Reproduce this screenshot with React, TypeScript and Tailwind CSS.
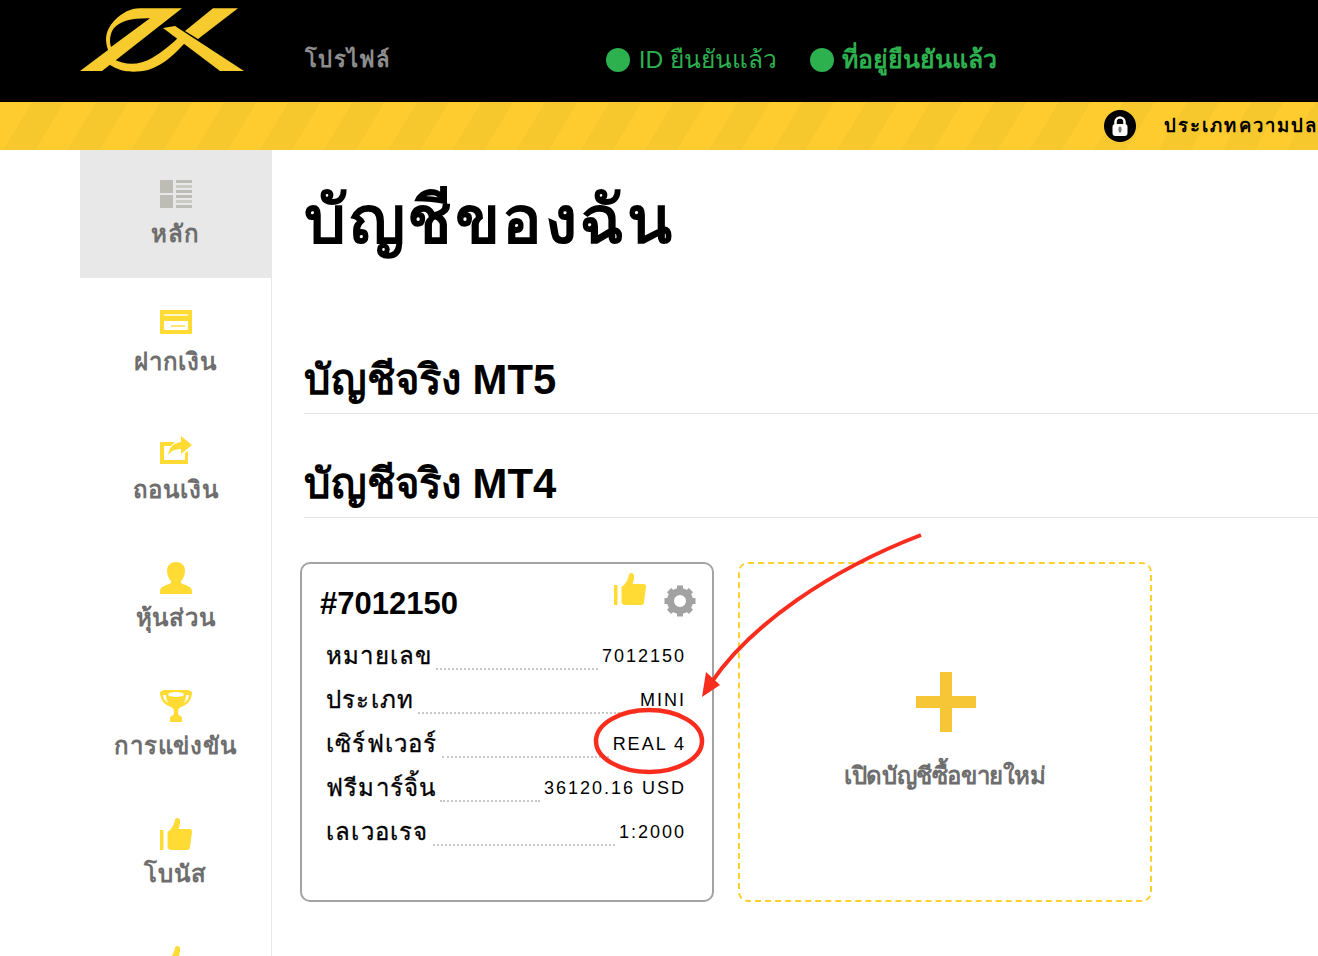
import React from "react";

const yellow = "#ffdb33";

const GridIcon = () => (
  <svg width="32" height="28" viewBox="0 0 32 28" fill="#bdbdb5">
    <rect x="0" y="0" width="13" height="13" />
    <rect x="0" y="15" width="13" height="13" />
    <rect x="16" y="0" width="16" height="3" />
    <rect x="16" y="5" width="16" height="3" opacity="0.7" />
    <rect x="16" y="10" width="16" height="3" />
    <rect x="16" y="15" width="16" height="3" />
    <rect x="16" y="20" width="16" height="3" opacity="0.7" />
    <rect x="16" y="25" width="16" height="3" />
  </svg>
);

const CardIcon = () => (
  <svg width="32" height="24" viewBox="0 0 32 24">
    <rect width="32" height="24" fill={yellow} />
    <rect x="4" y="4" width="24" height="2" fill="#fff" opacity="0.7" />
    <rect x="4" y="11" width="24" height="9" rx="1" fill="#fff" />
    <rect x="11" y="15" width="14" height="2" fill={yellow} opacity="0.7" />
  </svg>
);

const ShareIcon = () => (
  <svg width="32" height="28" viewBox="0 0 32 28" fill={yellow}>
    <path d="M0 6h15l-4 4H4v14h21v-7l3-2v13H0z" />
    <path d="M21 0l11 9-11 9v-5c-6 0-10 2-13 6 1-7 5-12 13-13z" />
  </svg>
);

const PersonIcon = () => (
  <svg width="32" height="32" viewBox="0 0 32 32" fill={yellow}>
    <path d="M16 0c6 0 9 4 9 9 0 4-2 8-4 10v2c3 2 11 3 11 8v3H0v-3c0-5 8-6 11-8v-2c-2-2-4-6-4-10 0-5 3-9 9-9z" />
  </svg>
);

const TrophyIcon = () => (
  <svg width="32" height="32" viewBox="0 0 32 32" fill={yellow}>
    <path d="M4 0h24l4 2c0 7-4 13-11 15-2 1-3 2-3 5 0 2 1 4 4 5v5H10v-5c3-1 4-3 4-5 0-3-1-4-3-5C4 15 0 9 0 2z" />
    <ellipse cx="16" cy="4.500" rx="8" ry="2.500" fill="#fff" />
    <path d="M3 5c0 3 2 6 5 8-1-2-2-5-2-8zM29 5c0 3-2 6-5 8 1-2 2-5 2-8z" fill="#fff" />
  </svg>
);

const ThumbIcon = () => (
  <svg width="32" height="32" viewBox="0 0 32 32" fill={yellow}>
    <rect x="0" y="12" width="3.500" height="20" />
    <path d="M7.500 14c3-2 6-6 7-10 0-2 1-4 3-4 3 0 3 4 2 8l-1 3h11c2 0 2.500 1 2.500 3l-2 15c0 2-1 3-3 3H12c-3 0-4.500-1-4.500-3z" />
  </svg>
);

// ring plus eight teeth, the reference gear is a bit soft and light
const GearIcon = () => (
  <svg width="32" height="32" viewBox="0 0 32 32" fill="#a2a2a2">
    <circle cx="16" cy="16" r="9.500" fill="none" stroke="#a2a2a2" strokeWidth="7" />
    {[0, 45, 90, 135, 180, 225, 270, 315].map((a) => (
      <rect key={a} x="13" y="0.500" width="6" height="6" transform={`rotate(${a} 16 16)`} />
    ))}
  </svg>
);

const navItems = [
  { label: "หลัก", icon: <GridIcon />, active: true },
  { label: "ฝากเงิน", icon: <CardIcon /> },
  { label: "ถอนเงิน", icon: <ShareIcon /> },
  { label: "หุ้นส่วน", icon: <PersonIcon /> },
  { label: "การแข่งขัน", icon: <TrophyIcon /> },
  { label: "โบนัส", icon: <ThumbIcon /> },
  { label: "", icon: <ThumbIcon /> },
];

const rows = [
  { k: "หมายเลข", v: "7012150" },
  { k: "ประเภท", v: "MINI" },
  { k: "เซิร์ฟเวอร์", v: "REAL 4" },
  { k: "ฟรีมาร์จิ้น", v: "36120.16 USD" },
  { k: "เลเวอเรจ", v: "1:2000" },
];

export default function App() {
  return (
    <div className="relative h-[956px] overflow-hidden bg-white font-['Liberation_Sans','Noto_Sans',sans-serif]">
      <header className="flex h-[102px] items-start bg-black pl-20">
        <svg width="164" height="64" viewBox="0 0 164 64" className="mt-[8px]" fill="#f7cb2d">
          <path
            fillRule="evenodd"
            d="M0 63 L28 42 C24 30 26 22 34 13 C42 5 50 0.300 60 0.300 L102 0.300 L22 63 Z M70 10.300 C52 10 40 13 34 20 C30 25 29 33 31 39 Z"
          />
          <path d="M33 51 C46 58 60 57 72 50 C82 44 92 36 100 28 L106 34 C96 44 86 56 68 62 C60 64 50 64 45 63 C38 62 32 58 28 56 Z" />
          <path d="M83 20 L95 18 L164 63 L140 63 Z" />
          <path d="M133 0.300 L158 0.300 L118 31 L105 23 Z" />
        </svg>
        <div className="ml-[61px] mt-[46px] text-[22px] leading-[28px] font-bold tracking-[1.3px] text-[#8e8e8e]">โปรไฟล์</div>
        <div className="ml-[215px] mt-[44px] flex items-center text-[25px] leading-[32px] text-[#2db14f]">
          <span className="h-6 w-6 rounded-full bg-[#2db14f]" />
          <span className="ml-[9px] text-[24.500px]">ID ยืนยันแล้ว</span>
          <span className="ml-[33px] h-6 w-6 rounded-full bg-[#2db14f]" />
          <span className="ml-[8px] text-[24.800px] font-bold">ที่อยู่ยืนยันแล้ว</span>
        </div>
      </header>
      <div className="flex h-12 items-center justify-end overflow-hidden whitespace-nowrap bg-[repeating-linear-gradient(121deg,#fecc2e_0px,#fecc2e_27.5px,#f6c82e_27.5px,#f6c82e_55px)]">
        <span className="flex h-8 w-8 items-center justify-center rounded-full bg-black">
          <svg width="18" height="20" viewBox="0 0 18 20">
            <path d="M4.500 9V6a4.500 4.500 0 0 1 9 0v3" fill="none" stroke="#fff" strokeWidth="2.500" />
            <rect x="1.500" y="8" width="15" height="12" rx="3" fill="#fff" />
            <rect x="7.500" y="10.500" width="3" height="6" rx="1.500" fill="#777" />
          </svg>
        </span>
        <span className="ml-[28px] w-[154px] overflow-hidden text-[18.500px] font-bold tracking-[2.1px] text-black">ประเภทความปลอดภัย</span>
      </div>
      <div className="flex">
        <aside className="ml-20 w-[192px] shrink-0 border-r border-[#e8e8e8]">
          {navItems.map((item, i) => (
            <div
              key={i}
              className={`flex h-[128px] flex-col items-center pt-[28px] ${item.active ? "bg-[#e8e8e8]" : ""}`}
            >
              <div className="flex h-8 items-center justify-center">{item.icon}</div>
              <div className="mt-[8px] text-[24px] leading-[32px] font-bold tracking-[0.8px] text-[#6e6e6e]">{item.label}</div>
            </div>
          ))}
        </aside>
        <main className="min-w-0 flex-1 pl-8">
          <h1 className="mt-[30px] text-[66px] leading-[80px] font-bold tracking-[2.5px] text-black">บัญชีของฉัน</h1>
          <h2 className="mt-[94px] border-b border-[#e4e4e4] pb-[7px] text-[41.800px] leading-[52px] font-bold text-black">บัญชีจริง MT5</h2>
          <h2 className="mt-[44px] border-b border-[#e4e4e4] pb-[7px] text-[41.800px] leading-[52px] font-bold text-black">บัญชีจริง MT4</h2>
          <div className="-ml-1 mt-[44px] flex gap-[24px]">
            <div className="h-[340px] w-[414px] rounded-[10px] border-2 border-[#a3a3a3] px-[18px] pt-[8px]">
              <div className="flex items-start justify-between">
                <div className="mt-[12px] text-[31px] leading-[40px] font-bold text-black">#7012150</div>
                <div className="-mr-[2px] mt-px flex items-start gap-[18px]">
                  <ThumbIcon />
                  <div className="mt-[12px]"><GearIcon /></div>
                </div>
              </div>
              <div className="mt-[8px] pl-[6px] pr-[8px]">
                {rows.map((r) => (
                  <div key={r.k} className="flex h-[44px] items-end pb-[2px]">
                    <span className="text-[24px] leading-[36px] tracking-[1.2px] text-black [-webkit-text-stroke:0.3px_black]">{r.k}</span>
                    <span className="mx-[4px] mb-[4px] flex-1 border-b-2 border-dotted border-[#c8c8c8]" />
                    <span className="text-[18px] leading-[36px] tracking-[2px] text-black">{r.v}</span>
                  </div>
                ))}
              </div>
            </div>
            <div className="flex h-[340px] w-[414px] flex-col items-center rounded-[10px] border-2 border-dashed border-[#fdd02f] pt-[108px]">
              <svg width="60" height="60" viewBox="0 0 60 60" fill="#f6c636" className="ml-[2px]">
                <rect x="24" y="0" width="12" height="60" />
                <rect x="0" y="24" width="60" height="12" />
              </svg>
              <div className="mt-[28px] text-[24px] leading-[32px] font-bold tracking-[-0.4px] text-[#6e6e6e]">เปิดบัญชีซื้อขายใหม่</div>
            </div>
          </div>
        </main>
      </div>
      <svg width="1318" height="956" className="pointer-events-none absolute left-0 top-0" fill="none">
        <ellipse cx="649" cy="741" rx="53" ry="31" stroke="#f92d1e" strokeWidth="4.500" />
        <path d="M921 535 C830 570 750 625 711 683" stroke="#f92d1e" strokeWidth="4" />
        <path d="M702 697 L706 672 L720 685 Z" fill="#f92d1e" />
      </svg>
    </div>
  );
}
